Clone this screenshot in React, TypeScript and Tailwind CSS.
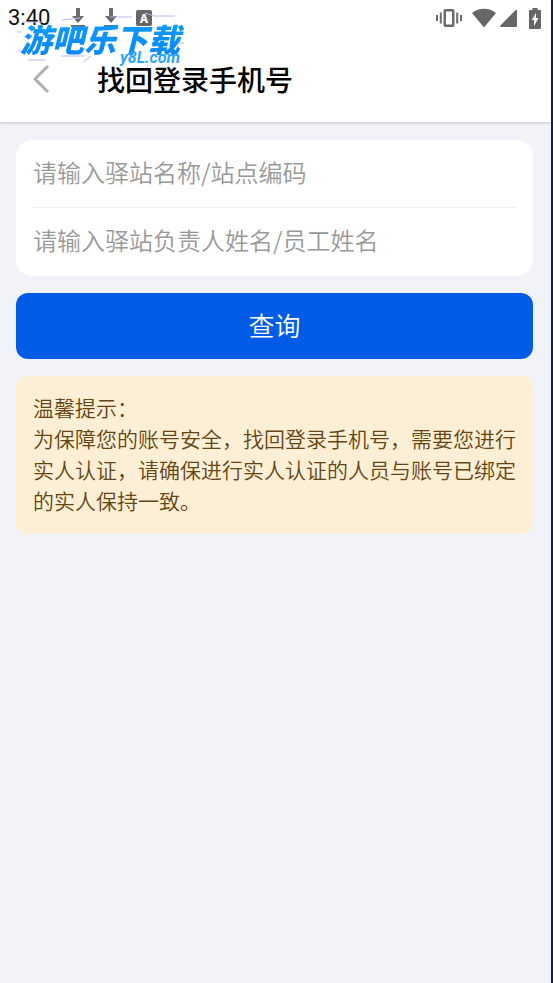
import type { ReactNode } from "react";

type Field = {
  id: string;
  placeholder: string;
};

const fields: Field[] = [
  { id: "station", placeholder: "请输入驿站名称/站点编码" },
  { id: "person", placeholder: "请输入驿站负责人姓名/员工姓名" },
];

const DownloadIcon = () => (
  <svg width="16" height="20" viewBox="0 0 16 20" fill="#6b6b6b">
    <path d="M6 0h4v8h4l-6 7-6-7h4zM1 17h14v2H1z" />
  </svg>
);

const LetterBadge = () => (
  <span className="flex h-4 w-4 items-center justify-center rounded-xs bg-[#666666] text-xs font-black text-white">
    A
  </span>
);

const VibrateIcon = () => (
  <svg width="26" height="20" viewBox="0 0 26 20" fill="#6b6b6b">
    <path
      fillRule="evenodd"
      d="M9.500 1h7a2 2 0 0 1 2 2v14a2 2 0 0 1-2 2h-7a2 2 0 0 1-2-2V3a2 2 0 0 1 2-2zM10 3.500v13h6v-13z"
    />
    <path d="M3.800 4.500h2v11h-2zM20.200 4.500h2v11h-2zM0 7h2v6H0zM24 7h2v6h-2z" />
  </svg>
);

const WifiIcon = () => (
  <svg width="24" height="20" viewBox="0 0 24 20" fill="#666666">
    <path d="M0 5C6.500-.8 17.500-.8 24 5L12.600 18.700a.8.8 0 0 1-1.200 0z" />
  </svg>
);

const SignalIcon = () => (
  <svg width="17" height="20" viewBox="0 0 17 20" fill="#666666">
    <path d="M17 2.500V18a1 1 0 0 1-1 1H1c-1 0-1.200-.8-.6-1.500L15.500 2.300c.6-.6 1.500-.5 1.500.2z" />
  </svg>
);

const BatteryIcon = () => (
  <svg width="12" height="21" viewBox="0 0 12 21">
    <path
      fill="#666666"
      d="M3.500 0h5v2H11a1 1 0 0 1 1 1v17a1 1 0 0 1-1 1H1a1 1 0 0 1-1-1V3a1 1 0 0 1 1-1h2.500z"
    />
    <path fill="#ffffff" d="M7 5v5h2.500L5 18v-6H2.800z" />
  </svg>
);

// Site watermark, floats over the status bar and the title bar
const Watermark = () => (
  <div className="pointer-events-none absolute left-4 top-2 h-14 w-44 italic">
    <svg
      className="absolute left-0 top-0"
      width="176"
      height="56"
      viewBox="0 0 176 56"
      fill="none"
      stroke="#b4b9f0"
      strokeWidth="1"
    >
      <path d="M6 14h20M46 12l18-2M94 9h22M129 5l9 3h21M5 24H1M2 42l8 4M45 48h24M75 48l-8 6M12 52h18M155 41l10-9M160 35h8" />
    </svg>
    <span className="absolute left-0 top-3 whitespace-nowrap bg-linear-to-b from-[#129dff] to-[#0787fa] bg-clip-text px-1 text-[32px] leading-9 font-black text-transparent">
      游吧乐下载
    </span>
    <span className="absolute left-26 top-10 font-[Roboto] text-base leading-5 font-bold text-[#2ba4fb]">
      y8L.com
    </span>
  </div>
);

const StatusBar = () => (
  <div className="flex h-9 items-center justify-between pl-2 pr-2.5">
    <div className="flex items-center">
      <span className="w-[62px] font-[Roboto] text-[22px] leading-9 text-[#111111]">
        3:40
      </span>
      <div className="flex items-center gap-[17px]">
        <DownloadIcon />
        <DownloadIcon />
        <LetterBadge />
      </div>
    </div>
    <div className="flex items-center">
      <VibrateIcon />
      <span className="ml-2.5">
        <WifiIcon />
      </span>
      <span className="ml-1">
        <SignalIcon />
      </span>
      <span className="ml-3">
        <BatteryIcon />
      </span>
    </div>
  </div>
);

const TitleBar = ({ children }: { children: ReactNode }) => (
  <div className="flex h-[86px] items-center gap-[47px]">
    <button type="button" aria-label="返回" className="ml-8">
      <svg
        width="18"
        height="28"
        viewBox="0 0 18 28"
        fill="none"
        stroke="#b0b0b0"
        strokeWidth="3"
      >
        <path d="M16 1L3 14l13 13" />
      </svg>
    </button>
    <h1 className="text-[28px] leading-9 font-medium text-black">{children}</h1>
  </div>
);

export default function App() {
  return (
    <div className="relative flex min-h-screen flex-col border-r-2 border-[#1f1d3d] bg-[#f2f3f8] font-['Noto_Sans_CJK_SC','Noto_Sans',sans-serif]">
      <header className="bg-white shadow-[0_1px_3px_rgba(0,0,0,0.2)]">
        <StatusBar />
        <TitleBar>找回登录手机号</TitleBar>
      </header>
      <Watermark />
      <main className="pl-4 pr-[18px] pt-[18px]">
        <form
          className="flex flex-col gap-[17px]"
          onSubmit={(e) => e.preventDefault()}
        >
          <div className="divide-y divide-[#f0f0f0] rounded-2xl bg-white px-[17px] pb-px">
            {fields.map((field) => (
              <div key={field.id}>
                <input
                  id={field.id}
                  type="text"
                  aria-label={field.placeholder}
                  placeholder={field.placeholder}
                  className="block h-[67px] w-full bg-transparent pb-1 text-2xl font-[350] text-[#333333] outline-none placeholder:text-[#999999]"
                />
              </div>
            ))}
          </div>
          <button
            type="submit"
            className="h-[66px] rounded-xl bg-[#005ce6] pb-1 text-[26px] font-[350] text-white"
          >
            查询
          </button>
        </form>
        <section className="mt-[17px] rounded-xl bg-[#fdefd6] pt-4 pb-[18px] pl-[17px] text-[21px] leading-[31px] font-[350] text-[#664510]">
          <h2>温馨提示：</h2>
          <p>
            为保障您的账号安全，找回登录手机号，需要您进行实人认证，请确保进行实人认证的人员与账号已绑定的实人保持一致。
          </p>
        </section>
      </main>
    </div>
  );
}
